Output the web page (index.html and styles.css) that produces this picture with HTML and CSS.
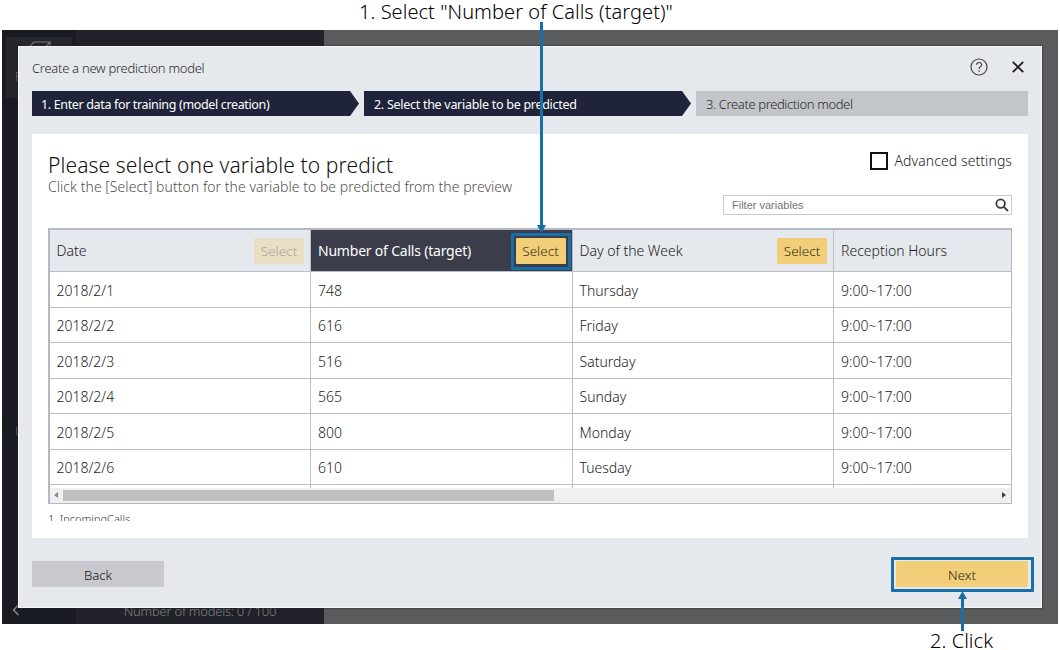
FILE: index.html
```html
<!DOCTYPE html>
<html lang="en">
<head>
<meta charset="utf-8">
<title>Create a new prediction model</title>
<link rel="stylesheet" href="styles.css">
</head>
<body>
<div class="stage">
  <div class="app">
    <div class="rail">
      <div class="project">
        <svg class="cube" width="26" height="20" viewBox="0 0 26 20"><path d="M1 8 L8 1 H24 V12 L17 19 H1 Z M1 8 H18 L24 1 M18 8 V19"/></svg>
        <span>P</span>
      </div>
      <span class="rail-word">U</span>
      <svg class="collapse" width="8" height="12" viewBox="0 0 8 12"><path d="M6.5 1 L1.5 6 L6.5 11"/></svg>
    </div>
    <div class="models"><span>Number of models: 0 / 100</span></div>
    <div class="shade"></div>
  </div>

  <div class="modal">
    <div class="title-row">
      <span>Create a new prediction model</span>
      <div class="tools">
        <svg width="18" height="18" viewBox="0 0 18 18" class="help"><circle cx="9" cy="9" r="8"/><path d="M6.5 6.8 C6.5 3.7 11.7 3.7 11.7 6.8 C11.7 8.7 9.1 8.6 9.1 11"/><path d="M9.1 12.2 V13.7"/></svg>
        <svg width="12" height="12" viewBox="0 0 12 12" class="close"><path d="M.8 .8 L11.2 11.2 M11.2 .8 L.8 11.2"/></svg>
      </div>
    </div>
    <div class="steps">
      <div class="step done first">1. Enter data for training (model creation)</div>
      <div class="step done">2. Select the variable to be predicted</div>
      <div class="step pending">3. Create prediction model</div>
    </div>
    <div class="content">
      <div class="intro">
        <div>
          <div class="heading">Please select one variable to predict</div>
          <div class="sub">Click the [Select] button for the variable to be predicted from the preview</div>
        </div>
        <div class="advanced"><span class="box"></span><span>Advanced settings</span></div>
      </div>
      <div class="filter">
        <span>Filter variables</span>
        <svg width="14" height="14" viewBox="0 0 14 14"><circle cx="5.6" cy="5.6" r="4.3"/><path d="M8.8 8.8 L13 13"/></svg>
      </div>
      <div class="grid">
        <div class="rows">
          <div class="row head">
            <div class="cell"><span>Date</span><span class="select off">Select</span></div>
            <div class="cell target"><span>Number of Calls (target)</span><span class="select">Select</span></div>
            <div class="cell"><span>Day of the Week</span><span class="select">Select</span></div>
            <div class="cell"><span>Reception Hours</span></div>
          </div>
          <div class="row"><div class="cell">2018/2/1</div><div class="cell">748</div><div class="cell">Thursday</div><div class="cell">9:00~17:00</div></div>
          <div class="row"><div class="cell">2018/2/2</div><div class="cell">616</div><div class="cell">Friday</div><div class="cell">9:00~17:00</div></div>
          <div class="row"><div class="cell">2018/2/3</div><div class="cell">516</div><div class="cell">Saturday</div><div class="cell">9:00~17:00</div></div>
          <div class="row"><div class="cell">2018/2/4</div><div class="cell">565</div><div class="cell">Sunday</div><div class="cell">9:00~17:00</div></div>
          <div class="row"><div class="cell">2018/2/5</div><div class="cell">800</div><div class="cell">Monday</div><div class="cell">9:00~17:00</div></div>
          <div class="row"><div class="cell">2018/2/6</div><div class="cell">610</div><div class="cell">Tuesday</div><div class="cell">9:00~17:00</div></div>
          <div class="row"><div class="cell"></div><div class="cell"></div><div class="cell"></div><div class="cell"></div></div>
        </div>
        <div class="scroll">
          <svg width="4" height="6" viewBox="0 0 4 6"><path fill="#8a8a8a" d="M4 0 V6 L0 3 Z"/></svg>
          <div class="thumb"></div>
          <svg width="4" height="6" viewBox="0 0 4 6"><path fill="#404040" d="M0 0 V6 L4 3 Z"/></svg>
        </div>
      </div>
      <div class="source">1. IncomingCalls</div>
    </div>
    <div class="actions">
      <div class="btn back">Back</div>
      <div class="btn next">Next</div>
    </div>
  </div>

  <div class="note note-1">1. Select "Number of Calls (target)"</div>
  <svg class="arrow arrow-1" width="10" height="211" viewBox="0 0 10 211"><path d="M3 0 H6 V203 H9 L4.5 211 L0 203 H3 Z"/></svg>
  <div class="ring ring-1"></div>
  <div class="ring ring-2"></div>
  <svg class="arrow arrow-2" width="10" height="40" viewBox="0 0 10 40"><path d="M5.5 0 L10 8 H7 V40 H4 V8 H1 Z"/></svg>
  <div class="note note-2">2. Click</div>
</div>
</body>
</html>
```
FILE: styles.css
```css
* { box-sizing: border-box; }
body { margin: 0; background: #fff; font-family: "Noto Sans", "Open Sans", sans-serif; font-weight: 300; color: #1c1c1c; }
.stage { position: relative; width: 1060px; height: 650px; padding: 30px 2px 0; overflow: hidden; white-space: nowrap; }
svg { display: block; flex: none; fill: none; }

.app { display: flex; height: 594px; background: #5a5b5c; }
.rail { width: 74px; padding: 7px 4px; background: #181b22; display: flex; flex-direction: column; }
.project { height: 61px; background: #26262d; display: flex; flex-direction: column; padding: 4px 0 0 9px; gap: 8px; font-size: 12px; color: #777; line-height: 16px; }
.cube { margin-left: 11px; stroke: #77787a; stroke-width: 1.2; }
.rail-word { margin: 326px 0 0 9px; font-size: 12px; line-height: 16px; color: #777; }
.collapse { margin: 164px 0 0 6px; stroke: #888; stroke-width: 1.5; }
.models { width: 248px; background: #212129; display: flex; align-items: flex-end; justify-content: center; padding-bottom: 4px; font-size: 13px; letter-spacing: -.24px; line-height: 18px; color: #808184; }
.shade { flex: 1; }

.modal { position: absolute; left: 18px; top: 46px; width: 1024px; height: 562px; padding: 0 13px; background: #e5e8ed; border: 1px solid #f4f6f8; box-shadow: 0 0 2px #222; display: flex; flex-direction: column; }
.title-row { height: 44px; display: flex; align-items: center; justify-content: space-between; padding-bottom: 2px; font-size: 13px; letter-spacing: -.28px; color: #2a2a2a; }
.tools { display: flex; align-items: center; gap: 24px; padding: 0 4px 3px 0; }
.help { stroke: #444; stroke-width: 1.2; }
.close { stroke: #1c1c1c; stroke-width: 1.8; }
.steps { display: grid; grid-template-columns: 327px 327px 332px; gap: 5px; height: 25px; font-size: 12.5px; }
.step { display: flex; align-items: center; padding: 2px 0 0 10px; }
.done { background: #20243a; color: #fff; font-weight: 400; letter-spacing: -.28px; clip-path: polygon(0 0, calc(100% - 9px) 0, 100% 50%, calc(100% - 9px) 100%, 0 100%); }
.first { padding-left: 9px; letter-spacing: -.35px; }
.pending { background: #c2c5ca; color: #2a2a2a; padding-top: 0; font-size: 13px; letter-spacing: -.38px; }
.content { margin-top: 18px; height: 404px; background: #fff; padding: 17px 16px 0; }
.intro { display: flex; justify-content: space-between; height: 44px; }
.heading { font-size: 21px; line-height: 28px; height: 26px; letter-spacing: .11px; color: #111; }
.sub { font-size: 14px; line-height: 20px; letter-spacing: .04px; color: #505050; }
.advanced { display: flex; align-items: center; gap: 7px; height: 19px; font-size: 14px; letter-spacing: .08px; }
.box { width: 18px; height: 18px; border: 2px solid #111; }
.filter { width: 289px; height: 20px; margin: 0 0 13px auto; border: 1px solid #c8cbd0; display: flex; align-items: center; justify-content: space-between; padding: 0 2px 0 8px; font: 11px "Liberation Sans", sans-serif; color: #757575; }
.filter svg { stroke: #3c3c3c; stroke-width: 1.8; }
.grid { width: 964px; height: 276px; border: 1px solid #b4bac4; border-left-width: 2px; border-top-width: 2px; display: flex; flex-direction: column; }
.rows { height: 258px; overflow: hidden; }
.row { display: grid; grid-template-columns: 261px 261.5px 261.5px 1fr; height: 35.5px; font-size: 14px; }
.cell { display: flex; align-items: center; justify-content: space-between; padding: 1.5px 6px 0 7px; border-right: 1px solid #b9bec8; border-bottom: 1px solid #b9bec8; }
.cell:first-child { padding-left: 6.5px; }
.cell:last-child { border-right: 0; }
.head { height: 42px; background: #e5e8ed; }
.head .cell { padding-top: 0; }
.head .target { background: #3b3d4a; color: #fff; font-weight: 400; letter-spacing: -.21px; }
.head .select { width: 50px; height: 26px; border-radius: 1px; background: #f3ce79; color: #332c18; display: flex; align-items: center; justify-content: center; padding-top: 1px; font-size: 13.5px; font-weight: 300; letter-spacing: 0; }
.head .off { background: #eadfc4; color: #a9a59e; }
.scroll { height: 15px; background: #f0f0f0; display: flex; align-items: center; padding: 0 5px 1px 4px; }
.thumb { width: 491px; height: 11px; background: #c0c0c0; margin: 0 auto 0 5px; }
.source { margin-top: 7px; height: 10px; overflow: hidden; font-size: 11px; line-height: 16px; color: #333; }
.actions { display: flex; justify-content: space-between; margin-top: 23px; }
.btn { width: 132px; height: 26px; border-radius: 1px; display: flex; align-items: center; justify-content: center; padding-top: 1px; font-size: 13.2px; }
.back { background: #c8c9ce; color: #111; }
.next { background: #f3ce79; color: #211c10; }

.note { position: absolute; font-size: 20px; line-height: 24px; letter-spacing: .05px; color: #000; }
.note-1 { left: 359px; top: 0; }
.note-2 { left: 930px; top: 629px; height: 21px; }
.arrow { position: absolute; fill: #176fa5; }
.arrow-1 { left: 537px; top: 22px; }
.arrow-2 { left: 957px; top: 591px; }
.ring { position: absolute; border: 3px solid #176fa5; border-radius: 1px; }
.ring-1 { left: 511px; top: 233px; width: 60px; height: 37px; }
.ring-2 { left: 891px; top: 557px; width: 143px; height: 35px; }
```
